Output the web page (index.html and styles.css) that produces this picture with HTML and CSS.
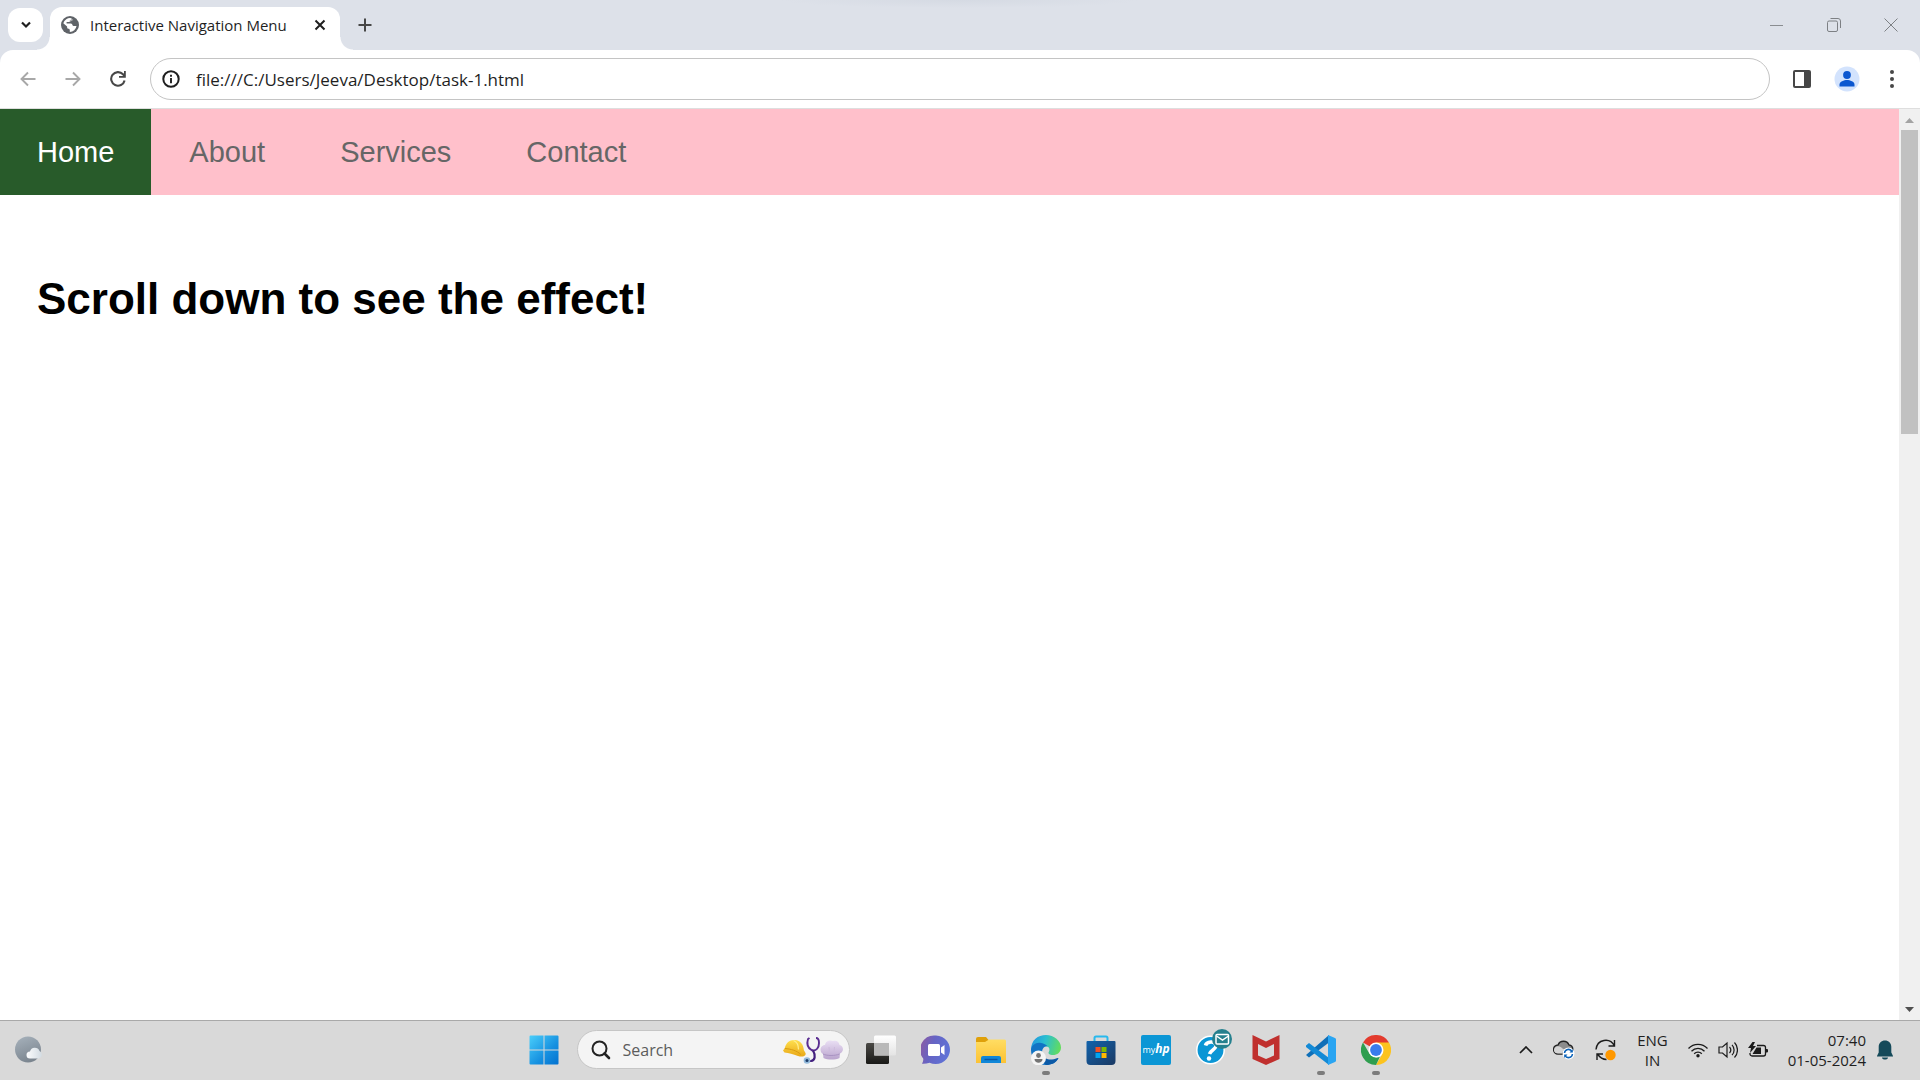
FILE: index.html
```html
<!DOCTYPE html>
<html lang="en">
<head>
<meta charset="utf-8">
<meta name="viewport" content="width=device-width, initial-scale=1">
<title>Interactive Navigation Menu</title>
<link rel="stylesheet" href="styles.css">
</head>
<body>
<header class="browser">
  <div class="tabstrip">
    <button class="tab-search" type="button" aria-label="Search tabs">
      <svg width="12" height="8" viewBox="0 0 12 8"><path d="M2 1.500l4 4 4-4" fill="none" stroke="#1f1f1f" stroke-width="2.200"/></svg>
    </button>
    <div class="tab">
      <svg width="18" height="18" viewBox="0 0 18 18"><circle cx="9" cy="9" r="9" fill="#5f6368"/><path d="M10.200 2.200c.5.800.1 1.600-.900 1.800-.500.100-.600.700-.600 1.200 0 .600-.700.800-1.300.800H6.200c-.600 0-.700.500-.700.900 0 .500.400.700.900.700h3.400c1.200 0 1.400.900 1.700 1.700.200.600.800.700 1.500.700h2.500a6.800 6.800 0 0 1-6.700 5.900v-1.600c0-.900-.500-1.500-1.300-1.500-.900 0-1.400-.600-1.400-1.500v-.900L2.300 7.200A6.900 6.900 0 0 1 10.200 2.200z" fill="#fff"/><path d="M10.200 2.200l-3.700 3.800h2L12.300 4z" fill="#fff" opacity=".5"/></svg>
      <span class="tab-title">Interactive Navigation Menu</span>
      <button class="tab-close" type="button" aria-label="Close tab">
        <svg width="12" height="12" viewBox="0 0 12 12"><path d="M1.500 1.500l9 9M10.500 1.500l-9 9" stroke="#1f1f1f" stroke-width="2"/></svg>
      </button>
    </div>
    <button class="new-tab" type="button" aria-label="New tab">
      <svg width="14" height="14" viewBox="0 0 14 14"><path d="M7 .5v13M.5 7h13" stroke="#474747" stroke-width="2"/></svg>
    </button>
    <div class="window-controls">
      <button type="button" aria-label="Minimize"><svg width="14" height="14" viewBox="0 0 14 14"><path d="M0 7.500h13" stroke="#8a8d91"/></svg></button>
      <button type="button" aria-label="Restore"><svg width="14" height="14" viewBox="0 0 14 14"><g fill="none" stroke="#7d8084"><rect x=".5" y="3" width="10" height="10.500" rx="1.500"/><path d="M3.500.5h7.500a2.500 2.500 0 0 1 2.500 2.500v7"/></g></svg></button>
      <button type="button" aria-label="Close"><svg width="14" height="14" viewBox="0 0 14 14"><path d="M.5.5l13 13M13.500.5l-13 13" stroke="#7d8084"/></svg></button>
    </div>
  </div>
  <div class="toolbar">
    <button type="button" aria-label="Back"><svg width="16" height="16" viewBox="0 0 16 16"><path d="M15.500 8H2M8 1.500L1.500 8 8 14.500" fill="none" stroke="#a8a8a8" stroke-width="1.900"/></svg></button>
    <button type="button" aria-label="Forward"><svg width="16" height="16" viewBox="0 0 16 16"><path d="M.5 8H14M8 1.500L14.500 8 8 14.500" fill="none" stroke="#a8a8a8" stroke-width="1.900"/></svg></button>
    <button type="button" aria-label="Reload"><svg width="16" height="16" viewBox="0 0 16 16"><path d="M14.600 9.500A6.800 6.800 0 1 1 13 3.300L14.500 5" fill="none" stroke="#474747" stroke-width="2.100"/><path d="M15.800 0v6.800H9V5h5V0z" fill="#474747"/></svg></button>
    <div class="address">
      <svg width="18" height="18" viewBox="0 0 18 18"><circle cx="9" cy="9" r="7.700" fill="none" stroke="#1f1f1f" stroke-width="2"/><path d="M9 8v5.200M9 4.800v2" stroke="#1f1f1f" stroke-width="1.900"/></svg>
      <input type="text" aria-label="Address" value="file:///C:/Users/Jeeva/Desktop/task-1.html">
    </div>
    <button type="button" aria-label="Side panel"><svg width="18" height="18" viewBox="0 0 18 18"><rect width="18" height="18" rx="2" fill="#474747"/><path d="M2 2h9v14H2z" fill="#fff"/></svg></button>
    <button type="button" aria-label="Profile"><svg width="26" height="26" viewBox="0 0 26 26"><circle cx="13" cy="13" r="12.500" fill="#d3e3fd"/><circle cx="13" cy="9" r="3.900" fill="#0b57d0"/><path d="M5.500 20.500v-2c0-3 4.500-4.500 7.500-4.500s7.500 1.500 7.500 4.500v2z" fill="#0b57d0"/></svg></button>
    <button type="button" aria-label="Menu"><svg width="4" height="18" viewBox="0 0 4 18"><g fill="#474747"><circle cx="2" cy="2" r="2"/><circle cx="2" cy="9" r="2"/><circle cx="2" cy="16" r="2"/></g></svg></button>
  </div>
</header>

<div class="viewport">
  <div class="page">
    <nav class="menu" aria-label="Main">
      <a class="menu-link active" href="#home" aria-current="page">Home</a>
      <a class="menu-link" href="#about">About</a>
      <a class="menu-link" href="#services">Services</a>
      <a class="menu-link" href="#contact">Contact</a>
    </nav>
    <main class="content">
      <h1>Scroll down to see the effect!</h1>
    </main>
  </div>
  <div class="scrollbar" aria-hidden="true">
    <svg width="21" height="21" viewBox="0 0 21 21"><path d="M6 14l4.500-5 4.500 5z" fill="#a3a3a3"/></svg>
    <div class="track"><div class="thumb"></div></div>
    <svg width="21" height="21" viewBox="0 0 21 21"><path d="M6 8l4.500 5L15 8z" fill="#505050"/></svg>
  </div>
</div>

<footer class="taskbar">
  <button class="weather" type="button" aria-label="Weather">
    <svg width="28" height="27" viewBox="0 0 28 27"><defs><linearGradient id="moon" x1=".3" y1="0" x2=".7" y2="1"><stop stop-color="#a3aeb8"/><stop offset="1" stop-color="#78828c"/></linearGradient><linearGradient id="puff" x1="0" y1="0" x2="1" y2="0"><stop stop-color="#fbfcfd"/><stop offset="1" stop-color="#d3dce3"/></linearGradient></defs><circle cx="13" cy="13.500" r="13" fill="url(#moon)"/><path d="M15 22.500a3.500 3.500 0 0 1 0-7 5 5 0 0 1 9.500-.500 4 4 0 0 1-.500 7.500z" fill="url(#puff)"/></svg>
  </button>

  <div class="apps">
    <button class="app" type="button" aria-label="Start">
      <svg width="30" height="30" viewBox="0 0 30 30"><defs><linearGradient id="win" gradientUnits="userSpaceOnUse" x1="0" y1="0" x2="30" y2="30"><stop stop-color="#4cd0fb"/><stop offset=".6" stop-color="#1690e0"/><stop offset="1" stop-color="#0270cf"/></linearGradient></defs><path d="M1.500.5H14.500v14H.5v-13a1 1 0 0 1 1-1zM15.500.5h13a1 1 0 0 1 1 1v13h-14zM.5 15.500h14v14h-13a1 1 0 0 1-1-1zM15.500 15.500h14v13a1 1 0 0 1-1 1h-13z" fill="url(#win)"/></svg>
    </button>
    <div class="search">
      <svg width="20" height="20" viewBox="0 0 20 20"><circle cx="8.500" cy="8.500" r="7" fill="none" stroke="#222" stroke-width="2"/><path d="M13.500 13.500l4.500 4.500" stroke="#222" stroke-width="2.600" stroke-linecap="round"/></svg>
      <input type="text" aria-label="Search" placeholder="Search">
      <svg width="60" height="28" viewBox="0 0 60 28"><defs><linearGradient id="hat" x1="0" y1="0" x2="0" y2="1"><stop stop-color="#ffe04f"/><stop offset="1" stop-color="#e9a816"/></linearGradient><linearGradient id="chef" x1="0" y1="0" x2="0" y2="1"><stop stop-color="#eadff4"/><stop offset="1" stop-color="#b9a3cd"/></linearGradient></defs><path d="M0 14.500c.5-.8 1.500-1.500 1.800-2.500C3 6.500 7 3.500 12 4c5.500.5 8.500 4.500 8.800 10 .7 1.500 1.700 2.500 2 4-1 3-4.500 3-7.800 2C10 18 6 17 1.500 16.500z" fill="url(#hat)"/><path d="M1.800 12.500c6 .5 12 2 16 6" fill="none" stroke="#d99a12"/><path d="M10.500 4.500c3.500 1.500 5 5 5 9" fill="none" stroke="#ffee8f" stroke-width="1.200"/><path d="M26.500 2L25 3c-1.500 5 0 9 3.500 11 5 2 7.500-3 7.500-7 0-3-1-5-3-5" fill="none" stroke="#5a2d91" stroke-width="1.900"/><path d="M30 14.500c3 5 2 10-2 10.500h-4" fill="none" stroke="#43207e" stroke-width="2.200"/><circle cx="24" cy="24.500" r="3.300" fill="#93badb"/><circle cx="24" cy="24.500" r="1.500" fill="#1d3c69"/><path d="M40.500 22l-.5-4c-4-2-3-9 2-9 1-5 6-5 8-4 4-1 6 1 6.500 4 4 1 5 6 .5 8.500l-.5 4.500c-4 2-12 2-16 0z" fill="url(#chef)"/><path d="M40 18c4 2 12 2 16.500 0" fill="none" stroke="#a993c2"/><path d="M46 11l.5 5M51.500 11l-.5 5" fill="none" stroke="#cdbbdd"/></svg>
    </div>
    <button class="app" type="button" aria-label="Task view">
      <svg width="30" height="30" viewBox="0 0 30 30"><defs><linearGradient id="tv" x1="0" y1="0" x2="0" y2="1"><stop stop-color="#4a4945"/><stop offset="1" stop-color="#191917"/></linearGradient><linearGradient id="tvf" x1="0" y1="0" x2="0" y2="1"><stop stop-color="#fff"/><stop offset="1" stop-color="#e4e4e4"/></linearGradient></defs><rect y="8" width="23" height="21" rx="1.500" fill="url(#tv)"/><rect x="8" y=".5" width="22" height="20" rx="1.500" fill="url(#tvf)"/><path d="M8 8h15v12.500H8z" fill="#b9b9b9"/></svg>
    </button>
    <button class="app" type="button" aria-label="Chat">
      <svg width="30" height="30" viewBox="0 0 30 30"><defs><linearGradient id="chat" x1="0" y1=".3" x2="1" y2=".6"><stop stop-color="#8a5ca6"/><stop offset=".4" stop-color="#6664c4"/><stop offset="1" stop-color="#5f74d8"/></linearGradient></defs><path d="M15 .5a14.300 14.300 0 1 1-6.500 27.200C6 28.500 3.500 29 1 28.700c1-1.700 1.500-3.500 1.300-5A14.300 14.300 0 0 1 15 .5z" fill="url(#chat)"/><rect x="7" y="9" width="12" height="12" rx="1.500" fill="#fff"/><path d="M20 12.500l3.500-2.500v10L20 17.500z" fill="#fff"/></svg>
    </button>
    <button class="app" type="button" aria-label="File Explorer">
      <svg width="30" height="30" viewBox="0 0 30 30"><defs><linearGradient id="fold" x1="0" y1="0" x2="0" y2="1"><stop stop-color="#ffdd63"/><stop offset="1" stop-color="#fcc234"/></linearGradient></defs><path d="M0 4a2 2 0 0 1 2-2h8l3 3.500V9H0z" fill="#dfa00a"/><path d="M0 7h9l4-2.500h15.500A1.500 1.500 0 0 1 30 6v22H0z" fill="url(#fold)"/><path d="M5 28v-5a2 2 0 0 1 2-2h16a2 2 0 0 1 2 2v5z" fill="#1187d8"/><path d="M8.500 24.500h13" stroke="#0b57a4" stroke-width="1.400"/></svg>
    </button>
    <button class="app running" type="button" aria-label="Microsoft Edge">
      <svg width="30" height="30" viewBox="0 0 30 30"><defs><linearGradient id="ed" x1="0" y1=".3" x2="1" y2=".5"><stop stop-color="#2196df"/><stop offset=".45" stop-color="#2bbfd0"/><stop offset="1" stop-color="#62dc5e"/></linearGradient></defs><path d="M0 15C0 5 7 0 15 0s15 6 15 12.500c0 5-4 7.500-8 7.500-3.500 0-5.500-1.500-4-3.500 1-2 .5-5-3-5S6 13 6 19z" fill="url(#ed)"/><path d="M0 15c.5-5 5-8 10-7 4 .7 6.500 3 6.500 3C12 11 11 15 11 18c1 5 5 8 9 8 3.500 0 6-1.500 7.500-3C25 28 20 30 15 30 6 30 0 23 0 15z" fill="#1173c4"/><path d="M11 18c1 5 6 7 10 6.500 3 0 5-2 6.500-1.500C25 28 20 30 15 30c-3-2-4-8-4-12z" fill="#0c5aa7"/><circle cx="7.500" cy="23" r="7.500" fill="#f5f5f5"/><circle cx="7.500" cy="20.500" r="2.400" fill="#757575"/><path d="M3.500 24h8c0 5-8 5-8 0z" fill="#757575"/></svg>
    </button>
    <button class="app" type="button" aria-label="Microsoft Store">
      <svg width="30" height="30" viewBox="0 0 30 30"><defs><linearGradient id="st" x1="0" y1="0" x2="1" y2="1"><stop stop-color="#1263ac"/><stop offset="1" stop-color="#1b3963"/></linearGradient></defs><path d="M8.500 7V3A1.500 1.500 0 0 1 10 1.500h10A1.500 1.500 0 0 1 21.500 3v4" fill="none" stroke="#28b9ee" stroke-width="2"/><path d="M.5 7a1 1 0 0 1 1-1h27a1 1 0 0 1 1 1v19a4 4 0 0 1-4 4h-21a4 4 0 0 1-4-4z" fill="url(#st)"/><path d="M9.500 12h5v5h-5z" fill="#f25022"/><path d="M15.500 12h5v5h-5z" fill="#7fba00"/><path d="M9.500 18h5v5h-5z" fill="#00a4ef"/><path d="M15.500 18h5v5h-5z" fill="#ffb900"/></svg>
    </button>
    <button class="app" type="button" aria-label="myHP"><span class="myhp">my<b>hp</b></span></button>
    <button class="app" type="button" aria-label="HP Support Assistant">
      <svg width="30" height="30" viewBox="0 0 30 30" overflow="visible"><circle cx="14.500" cy="15" r="13.700" fill="#0b96d5" stroke="#fff" stroke-width="1.500"/><path d="M9.500 10.500c1-4 9.500-5 10.500-.5.800 4-5 4.500-6.500 9" fill="none" stroke="#fff" stroke-width="3.600"/><circle cx="13" cy="23.500" r="2.200" fill="#fff"/><circle cx="26" cy="4" r="10" fill="#25808e"/><g fill="none" stroke="#fff" stroke-width="1.500"><rect x="20" y="-.5" width="12.500" height="9.500" rx="1"/><path d="M20.500 1l6 4 6-4"/></g></svg>
    </button>
    <button class="app" type="button" aria-label="McAfee">
      <svg width="28" height="30" viewBox="0 0 28 30"><path d="M.5 0L14 6.500 27.500 0v24L14 30 .5 24zM6 9v11.500l8 3.500 8-3.500V9l-8 4z" fill="#c0302e" fill-rule="evenodd"/></svg>
    </button>
    <button class="app running" type="button" aria-label="Visual Studio Code">
      <svg width="30" height="30" viewBox="0 0 30 30"><path d="M0 20l3 2.500L23 7.500V0z" fill="#0f6fb8"/><path d="M0 10.500L3 8l20 15v7L0 12z" fill="#138ad6"/><path d="M22 0l7 3a2 2 0 0 1 1 2v20a2 2 0 0 1-1 2l-7 3z" fill="#2aa5f2"/></svg>
    </button>
    <button class="app running" type="button" aria-label="Google Chrome">
      <svg width="30" height="30" viewBox="0 0 30 30"><path d="M15 15L2 7.500A15 15 0 0 1 28 7.500z" fill="#e33b2e"/><path d="M15 7.500h13A15 15 0 0 1 15 30l6.500-11.300z" fill="#fcc31e"/><path d="M15 30A15 15 0 0 1 2 7.500l6.500 11.200L15 22.500l3.800-.6z" fill="#2f9e4f"/><circle cx="15" cy="15" r="7.500" fill="#fff"/><circle cx="15" cy="15" r="5.900" fill="#3a7cec"/></svg>
    </button>
  </div>

  <div class="tray">
    <button type="button" aria-label="Show hidden icons"><svg width="14" height="8" viewBox="0 0 14 8"><path d="M1 7l6-6 6 6" fill="none" stroke="#1b1b1b" stroke-width="1.700"/></svg></button>
    <button type="button" aria-label="OneDrive"><svg width="22" height="20" viewBox="0 0 22 20"><path d="M5 14a4.500 4.500 0 0 1 0-9c2-5 9-5 11 0 5 .5 5 8 1 9z" fill="#8c8c8c" stroke="#222" stroke-width="1.300"/><path d="M2 7.500c4-3 6 0 9 2L9 13.500H5C1 13.500 0 10 2 7.500z" fill="#d5d5d5"/><circle cx="15.500" cy="13.500" r="6" fill="#fff"/><path d="M11.500 13a4 4 0 0 1 7.500-1.500M19.500 14a4 4 0 0 1-7.500 1.500" fill="none" stroke="#0b62b8" stroke-width="1.500"/><path d="M19.800 9v3.500h-3.300zM11.200 18v-3.500h3.300z" fill="#0b62b8"/></svg></button>
    <button type="button" aria-label="Update"><svg width="22" height="22" viewBox="0 0 22 22"><g fill="none" stroke="#1b1b1b" stroke-width="1.400"><path d="M1 10.500C2 0 15 -2 19.500 7M19.500 1v6h-6M2 21v-6h6M2.500 15c2 3 4.500 5.500 9 5.500"/></g><circle cx="15.500" cy="16" r="5.200" fill="#ff9800"/></svg></button>
    <button class="language" type="button">ENG<br>IN</button>
    <button class="status" type="button" aria-label="Network, volume and battery">
      <svg width="20" height="16" viewBox="0 0 20 16"><g fill="none" stroke="#1b1b1b" stroke-width="1.300"><path d="M.5 6.500a13.200 13.200 0 0 1 19 0M3.500 9.200a9 9 0 0 1 13 0M6.200 11.800a5.300 5.300 0 0 1 7.600 0"/></g><circle cx="10" cy="13.800" r="1.700" fill="#1b1b1b"/></svg>
      <svg width="20" height="18" viewBox="0 0 20 18"><path d="M1 6h3.500L9 2v14l-4.500-4H1zM11.500 6a4.500 4.500 0 0 1 0 6M14 3.800a7.500 7.500 0 0 1 0 10.400M16.500 1.500a11 11 0 0 1 0 15" fill="none" stroke="#1b1b1b" stroke-width="1.200"/></svg>
      <svg width="20" height="16" viewBox="0 0 20 16"><path d="M9 3.500h6.500a2 2 0 0 1 2 2v6.500a2 2 0 0 1-2 2H4a2 2 0 0 1-2-2v-1" fill="none" stroke="#1b1b1b" stroke-width="1.300"/><path d="M18 7h1a1 1 0 0 1 1 1v1.500a1 1 0 0 1-1 1h-1zM8.500 5.500H13v6.500H4.500zM4.500 0L0 6h3l-1 5 6-7H5l2-4z" fill="#1b1b1b"/></svg>
    </button>
    <button class="clock" type="button"><time datetime="2024-05-01T07:40">07:40<br>01-05-2024</time></button>
    <button type="button" aria-label="Notifications"><svg width="16" height="20" viewBox="0 0 16 20"><path d="M8 .5c3.600 0 6.300 2.700 6.300 6.200v5.800L16 16v.5H0V16l1.700-3.500V6.700C1.700 3.200 4.400.5 8 .5zM5 17.500h6c0 2.700-6 2.700-6 0z" fill="#154a5a"/></svg></button>
  </div>
</footer>
</body>
</html>
```
FILE: styles.css
```css
* {
  box-sizing: border-box;
}

body {
  display: flex;
  flex-direction: column;
  min-height: 100vh;
  margin: 0;
  background: #fff;
  font-family: "Open Sans", "Noto Sans", sans-serif;
  color: #1f1f1f;
}

button {
  display: flex;
  align-items: center;
  justify-content: center;
  margin: 0;
  padding: 0;
  border: 0;
  background: none;
  color: inherit;
  font: inherit;
}

input {
  flex: 1;
  min-width: 0;
  padding: 0;
  border: 0;
  outline: 0;
  background: none;
  color: inherit;
  font: inherit;
}

svg {
  display: block;
  flex: none;
}

/* Browser window frame */
.browser {
  background: radial-gradient(180px 8px at 50% 0, #d5dae3, transparent) #dde1e9;
}

.tabstrip {
  display: flex;
  height: 50px;
  padding: 0 1px 0 8px;
}

.tab-search {
  width: 35px;
  height: 34px;
  margin: 8px 7px 0 0;
  border-radius: 12px;
  background: #fff;
}

.tab {
  position: relative;
  display: flex;
  align-items: center;
  width: 290px;
  margin-top: 7px;
  padding: 0 13px 7px 11px;
  border-radius: 12px 12px 0 0;
  background: #fff;
  font-size: 15px;
}

.tab::before,
.tab::after {
  content: "";
  position: absolute;
  bottom: 0;
  width: 13px;
  height: 13px;
}

.tab::before {
  right: 100%;
  background: radial-gradient(circle at 0 0, transparent 12px, #fff 13px);
}

.tab::after {
  left: 100%;
  background: radial-gradient(circle at 100% 0, transparent 12px, #fff 13px);
}

.tab-title {
  flex: 1;
  margin-left: 11px;
  white-space: nowrap;
}

.tab-close {
  width: 14px;
  height: 14px;
}

.new-tab {
  width: 50px;
}

.window-controls {
  display: flex;
  margin-left: auto;
}

.window-controls button {
  width: 57px;
}

.toolbar {
  display: flex;
  align-items: center;
  height: 59px;
  padding: 0 6px 0 5px;
  border-bottom: 1px solid #dedede;
  border-radius: 13px 13px 0 0;
  background: #fff;
}

.toolbar button {
  width: 45px;
  height: 45px;
}

.address {
  display: flex;
  flex: 1;
  align-items: center;
  gap: 16px;
  height: 42px;
  margin: 0 9px 0 10px;
  padding: 0 20px 0 11px;
  border: 1px solid #c4c4c4;
  border-radius: 21px;
  font-size: 17px;
}

/* Web page */
.viewport {
  display: flex;
  flex: 1;
}

.page {
  flex: 1;
  font-family: "Liberation Sans", Arial, sans-serif;
}

.menu {
  display: flex;
  gap: 1px;
  background: #ffc0cb;
}

.menu-link {
  padding: 26px 37px;
  color: #666;
  font-size: 29px;
  line-height: 34px;
  text-decoration: none;
}

.menu-link.active {
  background: #285b2a;
  color: #fff;
}

.content {
  padding: 78px 37px;
}

h1 {
  margin: 0;
  color: #000;
  font-size: 44px;
  line-height: 52px;
}

.scrollbar {
  display: flex;
  flex-direction: column;
  width: 21px;
  background: #f0f0f0;
}

.track {
  flex: 1;
  padding: 0 2px;
}

.thumb {
  height: 35%;
  background: #c1c1c1;
}

/* Desktop taskbar */
.taskbar {
  display: grid;
  grid-template-columns: 1fr auto 1fr;
  align-items: center;
  height: 60px;
  padding-bottom: 2px;
  border-top: 1px solid #a9a9a9;
  background: #d9d9d9;
}

.weather {
  width: 58px;
}

.apps {
  display: flex;
  align-items: center;
}

.app {
  position: relative;
  width: 55px;
  height: 56px;
}

.running::after {
  content: "";
  position: absolute;
  bottom: 3px;
  width: 8px;
  height: 4px;
  border-radius: 2px;
  background: #7c7c7c;
}

.myhp {
  width: 30px;
  height: 30px;
  border-radius: 2px;
  background: #0b96d5;
  color: #fff;
  font-size: 9px;
  line-height: 28px;
  text-align: center;
}

.myhp b {
  font-size: 12px;
  font-style: italic;
}

.search {
  display: flex;
  align-items: center;
  gap: 12px;
  width: 273px;
  height: 39px;
  margin: 0 4px 0 5px;
  padding: 0 6px 0 13px;
  border: 1px solid #c6c6c6;
  border-radius: 20px;
  background: #f4f4f4;
  font-size: 16px;
}

.search input::placeholder {
  color: #5c5c5c;
  opacity: 1;
}

.tray {
  display: flex;
  align-items: center;
  justify-content: flex-end;
  gap: 20px;
  padding-right: 27px;
  font-size: 15px;
  line-height: 20px;
}

.status {
  gap: 10px;
}

.clock {
  margin-right: -9px;
  text-align: right;
}
```
